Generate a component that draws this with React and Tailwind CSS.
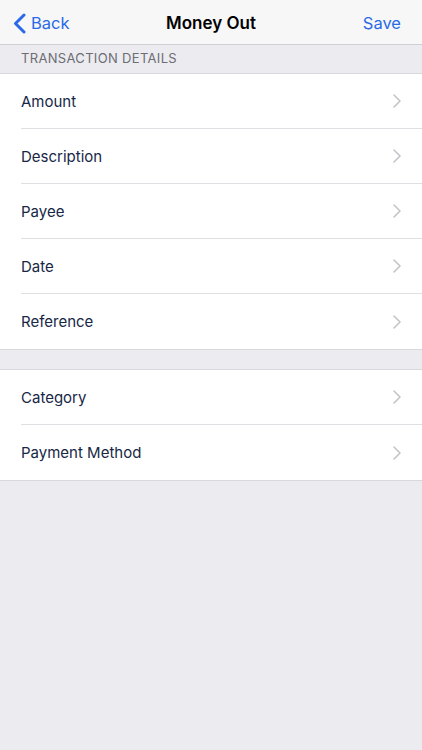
import React from 'react'

const Chevron = () => (
  <svg width="8" height="14" viewBox="0 0 8 14" fill="none">
    <path d="M1 1l6 6-6 6" stroke="#c4c4c9" strokeWidth="1.6" strokeLinecap="round" strokeLinejoin="round" />
  </svg>
)

const Row = ({ label, last }) => (
  <div className="flex h-[55px] items-center pl-[21px]">
    <div className={`flex h-full flex-1 items-center justify-between pr-[21px] ${last ? '' : 'border-b border-[#dedee3]'}`}>
      <span className="pt-[2px] text-[15px] text-[#172746]">{label}</span>
      <Chevron />
    </div>
  </div>
)

const Group = ({ items }) => (
  <div className="border-y border-[#d8d8dd] bg-white">
    {items.map((label, i) => (
      <Row key={label} label={label} last={i === items.length - 1} />
    ))}
  </div>
)

export default function App() {
  return (
    <div className="min-h-[750px] bg-[#ebebf0]" style={{ fontFamily: 'Inter, "Noto Sans", sans-serif' }}>
      <div className="relative flex h-[45px] items-center justify-between border-b border-[#cfcfd4] bg-[#f7f7f7] px-[13px] pt-[3px]">
        <div className="flex items-center gap-[5px] text-[#2a6ae8]">
          <svg width="13" height="21" viewBox="0 0 13 21" fill="none">
            <path d="M11 2L2.5 10.5 11 19" stroke="#2a6ae8" strokeWidth="3" strokeLinecap="round" strokeLinejoin="round" />
          </svg>
          <span className="text-[16.5px]">Back</span>
        </div>
        <span className="absolute left-1/2 -translate-x-1/2 text-[17px] font-semibold text-black">Money Out</span>
        <span className="pr-[8px] text-[16.5px] text-[#2a6ae8]">Save</span>
      </div>
      <div className="flex h-[28px] items-center px-[21px] text-[13px] tracking-wide text-[#6d6d72]">TRANSACTION DETAILS</div>
      <Group items={['Amount', 'Description', 'Payee', 'Date', 'Reference']} />
      <div className="h-[19px]" />
      <Group items={['Category', 'Payment Method']} />
    </div>
  )
}
